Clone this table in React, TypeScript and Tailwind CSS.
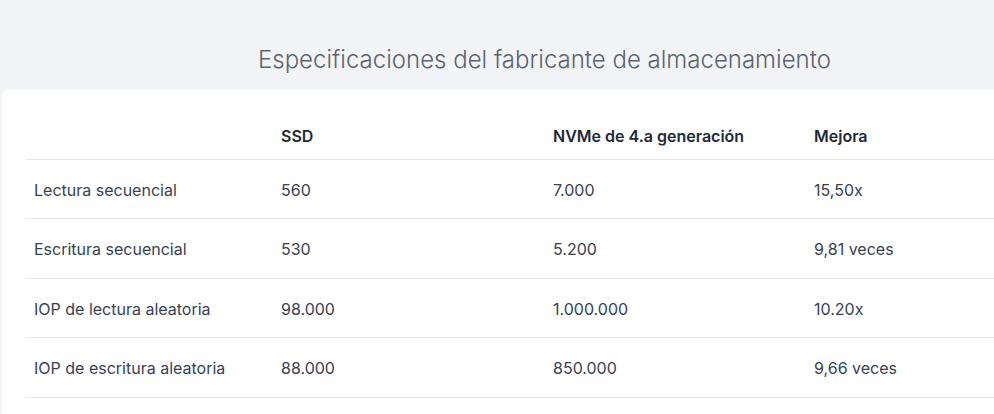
import React from "react";

const rows = [
  ["Lectura secuencial", "560", "7.000", "15,50x"],
  ["Escritura secuencial", "530", "5.200", "9,81 veces"],
  ["IOP de lectura aleatoria", "98.000", "1.000.000", "10.20x"],
  ["IOP de escritura aleatoria", "88.000", "850.000", "9,66 veces"],
];

export default function App() {
  return (
    <div
      className="w-[994px] h-[414px] overflow-hidden bg-[#f3f4f7]"
      style={{ fontFamily: "Inter, 'Noto Sans', sans-serif" }}
    >
      <div className="h-[89px] pl-[258px] pt-[44px]">
        <h1 className="text-[24px] leading-[32px] font-light text-[#5c6370] whitespace-nowrap">
          Especificaciones del fabricante de almacenamiento
        </h1>
      </div>
      <div className="ml-[2px] w-[1100px] h-[400px] bg-white rounded-tl-[8px] pl-[24px] pt-[22px]">
        <table className="w-[1076px] border-collapse text-[16px] text-[#374151]">
          <colgroup>
            <col className="w-[247px]" />
            <col className="w-[272px]" />
            <col className="w-[261px]" />
            <col />
          </colgroup>
          <thead>
            <tr className="h-[48px] border-b border-[#e5e7eb]">
              <th className="px-2 pt-[2px] text-left"></th>
              <th className="px-2 pt-[2px] text-left font-semibold text-[#1f2937]">SSD</th>
              <th className="px-2 pt-[2px] text-left font-semibold text-[#1f2937]">NVMe de 4.a generación</th>
              <th className="px-2 pt-[2px] text-left font-semibold text-[#1f2937]">Mejora</th>
            </tr>
          </thead>
          <tbody>
            {rows.map((r, i) => (
              <tr key={i} className="h-[59.5px] border-b border-[#e5e7eb]">
                {r.map((c, j) => (
                  <td key={j} className="px-2 pt-[2px] text-left font-normal">
                    {c}
                  </td>
                ))}
              </tr>
            ))}
          </tbody>
        </table>
      </div>
    </div>
  );
}
